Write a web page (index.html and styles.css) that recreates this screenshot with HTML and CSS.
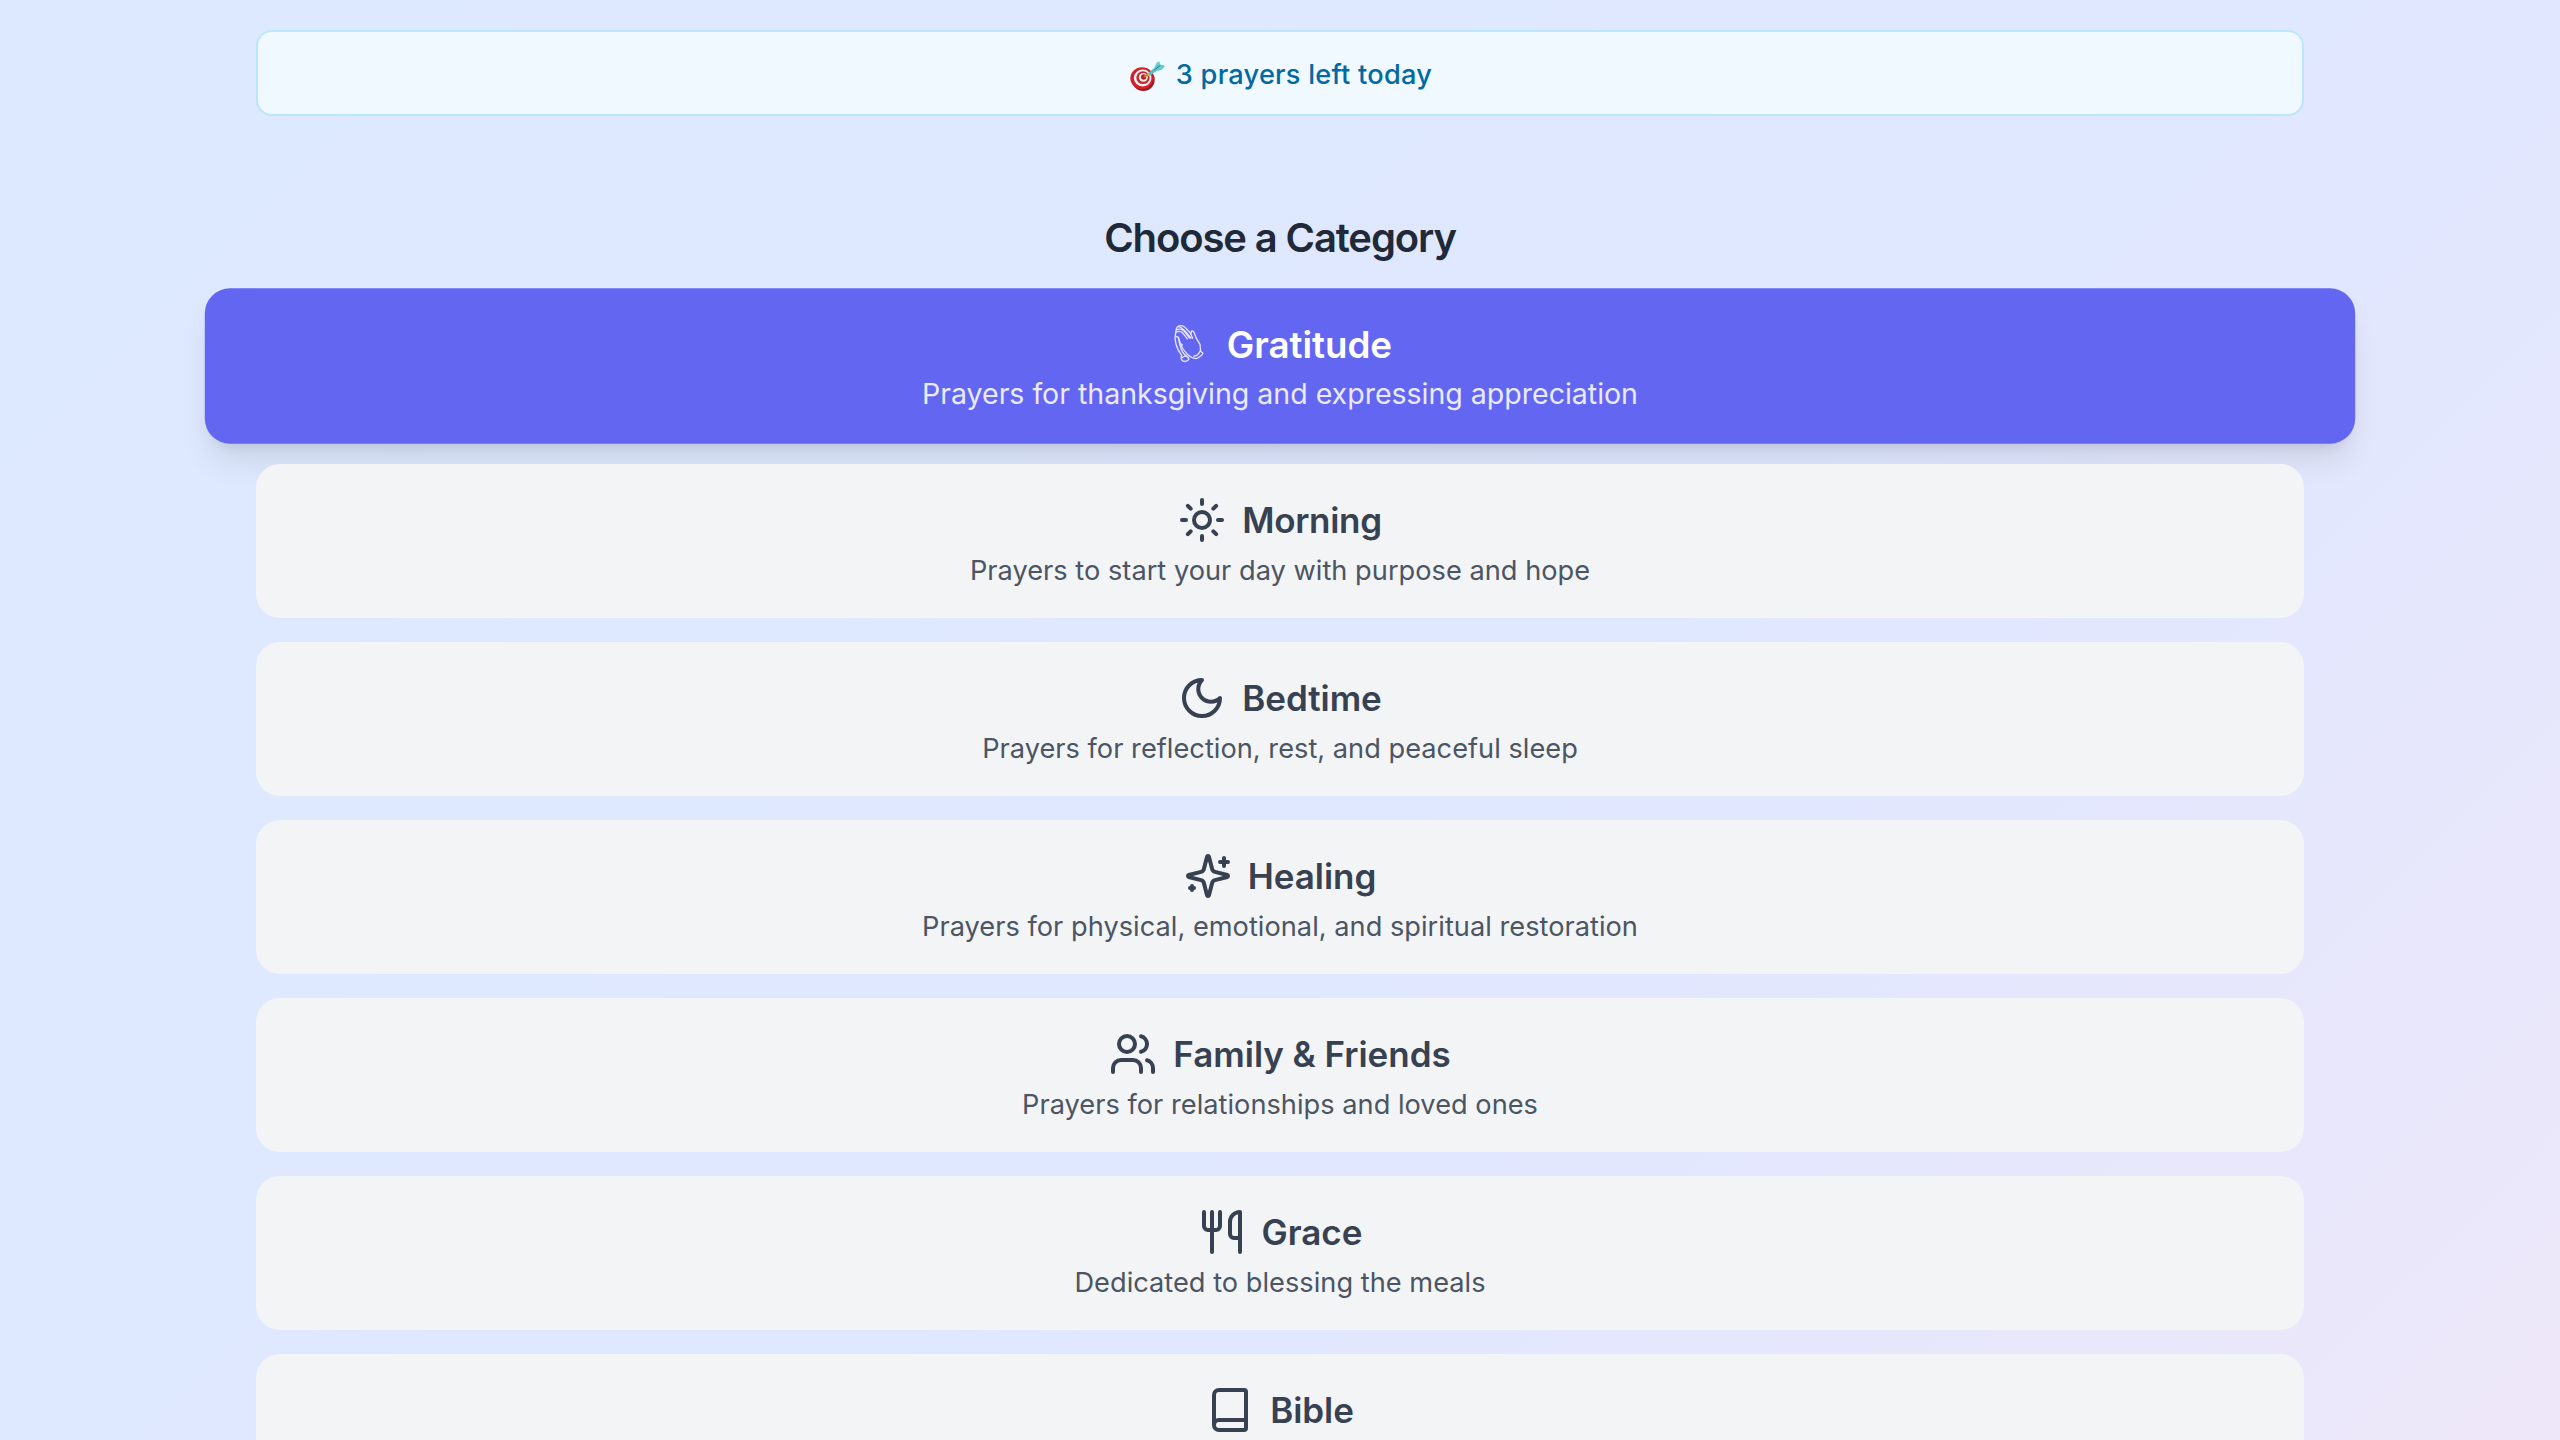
FILE: index.html
```html
<!DOCTYPE html>
<html lang="en">
<head>
<meta charset="utf-8">
<title>Choose a Category</title>
<link rel="stylesheet" href="styles.css">
</head>
<body>
<main class="page">
  <div class="quota">
    <svg class="quota-icon" viewBox="24 9 120 120" aria-hidden="true">
      <ellipse cx="70" cy="89" rx="34" ry="34" fill="#9b1620"/>
      <ellipse cx="66" cy="85" rx="35" ry="33" fill="#d3202b"/>
      <ellipse cx="68" cy="84" rx="26.500" ry="25.500" fill="#f6f1f1"/>
      <ellipse cx="69" cy="83" rx="20" ry="19" fill="#cf2430"/>
      <ellipse cx="70" cy="82" rx="13.500" ry="13" fill="#f4eded"/>
      <ellipse cx="71" cy="81" rx="8" ry="8" fill="#b5222a"/>
      <path d="M72 81 88 70" stroke="#b98a2e" stroke-width="5"/>
      <path d="M82 71 102 55l8 7-20 15-6 1Z" fill="#4fc0c8"/>
      <path d="M83 69l5 8" stroke="#e3b93c" stroke-width="4"/>
      <path d="M102 55 110 38l8-4 2 10 11 1 3 5-10 10-14 3Z" fill="#62cbd2"/>
      <path d="m103 60 18-14" stroke="#277f8c" stroke-width="3"/>
    </svg>
    <span class="quota-text">3 prayers left today</span>
  </div>

  <h2 class="heading">Choose a Category</h2>

  <div class="categories">
    <button class="card selected">
      <span class="title">
        <svg class="icon hands" viewBox="54 39 126 126">
          <path d="M96 136Q83 119 79 103L76 84 79 63Q80 51 88 48Q99 45 107 53L122 69 129 85"/>
          <path d="M80 67Q91 60 100 70L113 87M82 59Q94 54 104 64L119 84M87 50Q96 52 108 65L124 85"/>
          <path d="M123 72 126 63Q131 62 134 69L139 83 151 103 153 124 160 130Q155 140 139 146Q124 144 112 132Q99 119 91 98L86 82 79 79"/>
          <path d="M86 82 89 98 98 105M89 98Q93 121 105 134Q117 143 118 147Q112 158 99 153Q92 148 96 136M98 143Q104 137 110 139"/>
          <path d="M151 124Q146 137 133 139"/>
        </svg>
        <span>Gratitude</span>
      </span>
      <span class="desc">Prayers for thanksgiving and expressing appreciation</span>
    </button>

    <button class="card">
      <span class="title morning">
        <svg class="icon" viewBox="0 0 24 24"><circle cx="12" cy="12" r="4"/><path d="M12 2v2M12 20v2M4.930 4.930l1.410 1.410M17.660 17.660l1.410 1.410M2 12h2M20 12h2M6.340 17.660l-1.410 1.410M19.070 4.930l-1.410 1.410"/></svg>
        <span>Morning</span>
      </span>
      <span class="desc">Prayers to start your day with purpose and hope</span>
    </button>

    <button class="card">
      <span class="title">
        <svg class="icon" viewBox="0 0 24 24"><path d="M12 3a6 6 0 0 0 9 9 9 9 0 1 1-9-9Z"/></svg>
        <span>Bedtime</span>
      </span>
      <span class="desc">Prayers for reflection, rest, and peaceful sleep</span>
    </button>

    <button class="card">
      <span class="title">
        <svg class="icon" viewBox="0 0 24 24"><path d="M9.937 15.5A2 2 0 0 0 8.5 14.063l-6.135-1.582a.5.5 0 0 1 0-.962L8.5 9.936A2 2 0 0 0 9.937 8.5l1.582-6.135a.5.5 0 0 1 .963 0L14.063 8.500A2 2 0 0 0 15.500 9.937l6.135 1.581a.5.5 0 0 1 0 .964L15.500 14.063a2 2 0 0 0-1.437 1.437l-1.582 6.135a.5.5 0 0 1-.963 0zM20 3v4M22 5h-4M4 17v2M5 18H3"/></svg>
        <span>Healing</span>
      </span>
      <span class="desc">Prayers for physical, emotional, and spiritual restoration</span>
    </button>

    <button class="card">
      <span class="title">
        <svg class="icon" viewBox="0 0 24 24"><path d="M16 21v-2a4 4 0 0 0-4-4H6a4 4 0 0 0-4 4v2"/><circle cx="9" cy="7" r="4"/><path d="M22 21v-2a4 4 0 0 0-3-3.870M16 3.130a4 4 0 0 1 0 7.750"/></svg>
        <span>Family &amp; Friends</span>
      </span>
      <span class="desc">Prayers for relationships and loved ones</span>
    </button>

    <button class="card">
      <span class="title">
        <svg class="icon" viewBox="0 0 24 24"><path d="M3 2v7c0 1.100.9 2 2 2h4a2 2 0 0 0 2-2V2M7 2v20M21 15V2a5 5 0 0 0-5 5v6c0 1.100.9 2 2 2h3Zm0 0v7"/></svg>
        <span>Grace</span>
      </span>
      <span class="desc">Dedicated to blessing the meals</span>
    </button>

    <button class="card">
      <span class="title">
        <svg class="icon" viewBox="0 0 24 24"><path d="M4 19.500v-15A2.500 2.500 0 0 1 6.500 2H19a1 1 0 0 1 1 1v18a1 1 0 0 1-1 1H6.500a1 1 0 0 1 0-5H20"/></svg>
        <span>Bible</span>
      </span>
      <span class="desc"></span>
    </button>
  </div>
</main>
</body>
</html>
```
FILE: styles.css
```css
* {
  box-sizing: border-box;
}

body {
  margin: 0;
  height: 1440px;
  overflow: hidden;
  font-family: Inter, "Liberation Sans", sans-serif;
  background: linear-gradient(135deg, #dbeafe -537px, #e0e7ff 1750px, #fce7f3 3920px);
}

.page {
  width: 2048px;
  margin: 0 auto;
  padding-top: 30px;
}

.quota {
  display: flex;
  align-items: center;
  justify-content: center;
  gap: 8px;
  height: 86px;
  border: 2px solid #bae6fd;
  border-radius: 16px;
  background: #f0f9ff;
  color: #0369a1;
  font-size: 27.2px;
  font-weight: 500;
  letter-spacing: 0.24px;
}

.quota-icon {
  width: 40px;
  height: 40px;
}

.quota-text {
  padding-top: 2px;
}

.heading {
  margin: 94px 0 26px;
  color: #1f2937;
  font-size: 40px;
  font-weight: 600;
  line-height: 56px;
  letter-spacing: -1.12px;
  text-align: center;
}

.categories {
  display: flex;
  flex-direction: column;
  gap: 24px;
}

.card {
  display: flex;
  flex-direction: column;
  align-items: center;
  width: 100%;
  padding: 32px 32px 27px;
  border: 0;
  border-radius: 24px;
  background: #f3f4f6;
  color: #374151;
  font-family: inherit;
  isolation: isolate;
}

.title {
  display: flex;
  align-items: center;
  gap: 16px;
  font-size: 35px;
  font-weight: 600;
  line-height: 42px;
  letter-spacing: -0.04px;
}

.morning {
  letter-spacing: -0.3px;
}

.icon {
  width: 48px;
  height: 48px;
  fill: none;
  stroke: currentColor;
  stroke-width: 2;
  stroke-linecap: round;
  stroke-linejoin: round;
}

.desc {
  min-height: 40px;
  margin-top: 7px;
  color: #4b5563;
  font-size: 27.2px;
  line-height: 40px;
  letter-spacing: 0.02px;
}

.selected {
  background: #6366f1;
  color: #fff;
  transform: scale(1.05);
  box-shadow: 0 20px 30px -6px rgba(0, 0, 0, 0.1), 0 8px 12px -8px rgba(0, 0, 0, 0.1);
}

.selected .desc {
  color: #e9eafd;
  letter-spacing: -0.02px;
}

.hands {
  width: 40px;
  height: 42px;
  stroke: #e4e6ff;
  stroke-width: 4;
}
```
